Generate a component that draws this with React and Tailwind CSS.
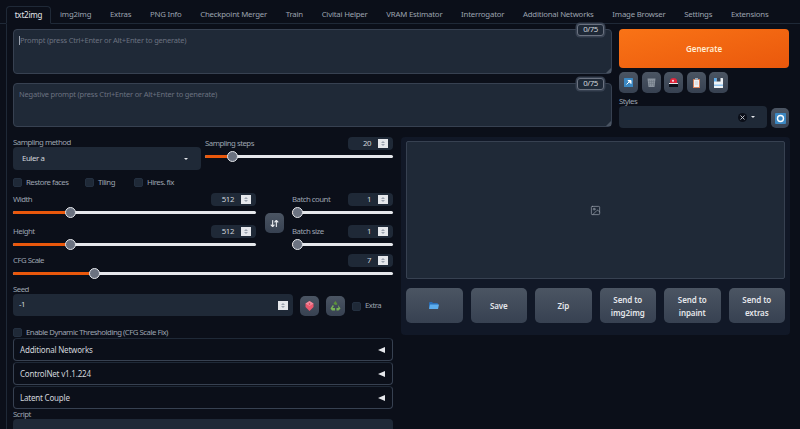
import { ArrowDownUp, Image, X } from "lucide-react";

const tabs = [
  "img2img",
  "Extras",
  "PNG Info",
  "Checkpoint Merger",
  "Train",
  "Civitai Helper",
  "VRAM Estimator",
  "Interrogator",
  "Additional Networks",
  "Image Browser",
  "Settings",
  "Extensions",
];

const Spinner = ({ h = "h-[9px]" }) => (
  <span className={`${h} w-[10px] shrink-0 bg-[#e5e7eb] flex flex-col items-center justify-center gap-px`}>
    <span className="w-0 h-0 border-x-[2px] border-x-transparent border-b-[2px] border-b-[#9ca3af]" />
    <span className="w-0 h-0 border-x-[2px] border-x-transparent border-t-[2px] border-t-[#9ca3af]" />
  </span>
);

const NumberBox = ({ value }) => (
  <div className="w-[45px] h-[13px] rounded-[4px] bg-[#1f2937] flex items-center justify-end pr-[5px] gap-[7px] text-[7.800px] tracking-[-0.4px] text-[#d1d5db]">
    <span>{value}</span>
    <Spinner />
  </div>
);

const Slider = ({ pct }) => (
  <div className="relative h-[3px] bg-[#e5e7eb] rounded-full">
    <div className="h-full bg-[#ea580c] rounded-l-full" style={{ width: `${pct}%` }} />
    <span
      className="absolute top-[-4px] ml-[-5.500px] w-[11px] h-[11px] rounded-full bg-[#6b7280] border border-[#e5e7eb]"
      style={{ left: `${pct}%` }}
    />
  </div>
);

const SliderField = ({ label, value, pct, className = "" }) => (
  <div className={className}>
    <div className="flex justify-between items-center h-[13px]">
      <span className="text-[7.800px] tracking-[-0.5px] text-[#9ca3af]">{label}</span>
      <NumberBox value={value} />
    </div>
    <div className="mt-[5px]">
      <Slider pct={pct} />
    </div>
  </div>
);

const Check = ({ label, className = "" }) => (
  <label className={`flex items-center gap-[4px] text-[7.800px] tracking-[-0.5px] text-[#9ca3af] ${className}`}>
    <span className="w-[9px] h-[9px] rounded-[2px] bg-[#1f2937] border border-[#243040]" />
    {label}
  </label>
);

const ToolButton = ({ children, className = "w-[19px] h-[21px]" }) => (
  <button className={`${className} shrink-0 rounded-[5px] bg-gradient-to-b from-[#4b5563] to-[#374151] flex items-center justify-center`}>
    {children}
  </button>
);

const Accordion = ({ title }) => (
  <div className="h-[23px] rounded-[4px] border border-[#374151] border-t-[#1f2937] flex items-center justify-between pl-[6px] pr-[7px] text-[8px] tracking-[-0.2px] text-[#d1d5db]">
    <span>{title}</span>
    <span className="w-0 h-0 border-y-[3.500px] border-y-transparent border-r-[7px] border-r-[#e5e7eb]" />
  </div>
);

const Counter = () => (
  <div className="absolute right-[7px] top-[-6px] w-[27px] h-[12px] rounded-[3px] bg-[#1f2937] border border-[#6b7280] shadow-[0_0_0_1.5px_#374151] flex items-center justify-center text-[7.800px] tracking-[-0.4px] text-[#d1d5db]">
    0/75
  </div>
);

const PromptBox = ({ placeholder, caret, className }) => (
  <div className={`relative rounded-[4px] bg-[#1f2937] border border-[#374151] pl-[5px] pt-[5px] text-[7.500px] tracking-[-0.2px] text-[#6b7280] flex items-start ${className}`}>
    {caret && <span className="w-px h-[9px] mt-[1px] bg-[#9ca3af] shrink-0" />}
    <span>{placeholder}</span>
    <Counter />
    <span className="absolute right-0 bottom-0 w-0 h-0 border-l-[5px] border-l-transparent border-b-[5px] border-b-[#4b5563]" />
  </div>
);

const SendIcon = () => (
  <svg width="9" height="9" viewBox="0 0 9 9">
    <rect width="9" height="9" rx="0.500" fill="#3b88c3" />
    <path d="M2.500 6.500l2.500-2.500M4 2.500h3v3z" stroke="#fff" strokeWidth="1" fill="#fff" />
  </svg>
);
const TrashIcon = () => (
  <svg width="9" height="9" viewBox="0 0 9 9">
    <path d="M0.500 0.500h8l-1 8.500h-6z" fill="#8a939e" />
    <path d="M2.500 2v6M4.500 2v6M6.500 2v6M1.500 3.500h6M1.500 5.500h6" stroke="#6b7480" strokeWidth=".5" />
  </svg>
);
const SirenIcon = () => (
  <svg width="9" height="9" viewBox="0 0 9 9">
    <path d="M1 5V3a3.500 3 0 017 0v2z" fill="#e0263c" />
    <circle cx="4" cy="2.800" r="1.100" fill="#fbd5dc" />
    <rect x="0" y="5" width="9" height="1" fill="#e5e7eb" />
    <rect x="0" y="6" width="9" height="3" fill="#0b0f19" />
  </svg>
);
const ClipboardIcon = () => (
  <svg width="7" height="10" viewBox="0 0 7 10">
    <rect y="1" width="7" height="9" rx="0.500" fill="#d9835f" />
    <rect x="1" y="2" width="5" height="7" fill="#eef0f2" />
    <rect x="2" y="0" width="3" height="2" fill="#99a8b8" />
    <path d="M2 4h3M2 6h3" stroke="#b6bec8" strokeWidth=".6" />
  </svg>
);
const SaveIcon = () => (
  <svg width="9" height="10" viewBox="0 0 9 10">
    <rect width="9" height="10" rx="0.500" fill="#eef2f6" />
    <rect x="0" y="6.500" width="9" height="1.500" fill="#8fc2ec" />
    <rect x="2.500" y="0" width="4" height="3.500" fill="#374151" />
    <rect x="0" y="0" width="2.500" height="3.500" fill="#5dadec" />
  </svg>
);
const RefreshIcon = () => (
  <svg width="11" height="11" viewBox="0 0 11 11">
    <rect width="11" height="11" rx="1" fill="#3b88c3" />
    <circle cx="5.500" cy="5.500" r="3" fill="none" stroke="#fff" strokeWidth="1.400" />
  </svg>
);
const DiceIcon = () => (
  <svg width="9" height="10" viewBox="0 0 9 10">
    <path d="M4.500 0L8.500 2.500V6L4.500 10L0.500 6V2.500z" fill="#ea596e" />
    <path d="M4.500 0L8.500 2.500L4.500 5L0.500 2.500z" fill="#f4abba" opacity=".6" />
    <circle cx="4.500" cy="3" r=".8" fill="#dd2e44" />
  </svg>
);
const RecycleIcon = () => (
  <svg width="11" height="10" viewBox="0 0 11 10">
    <path d="M5.500 0L7.500 3.200L6 4L4.500 3.500L3.500 2.500z" fill="#5c913b" />
    <path d="M8 4L10.500 7.500L8.500 9.500H6.500V7H8.500z" fill="#77b255" />
    <path d="M2.800 4L0.500 7.500L2 9.500H5V7H2.500L4 5z" fill="#77b255" />
  </svg>
);
const FolderIcon = () => (
  <svg width="10" height="7" viewBox="0 0 10 7">
    <path d="M0 1a1 1 0 011-1h2l1 1h4a1 1 0 011 1v4H0z" fill="#2a6db5" />
    <path d="M1 2.500h9l-1 4.500H0z" fill="#5dadec" />
  </svg>
);

const Action = ({ children }) => (
  <button className="flex-1 h-[35px] rounded-[5px] bg-gradient-to-b from-[#4b5563] to-[#374151] text-[8px] tracking-[-0.1px] leading-[13px] font-semibold text-[#e5e7eb] flex items-center justify-center">
    {children}
  </button>
);

export default function App() {
  return (
    <div
      className="h-[429px] w-[800px] overflow-hidden bg-[#0b0f19]"
      style={{ fontFamily: '"Noto Sans", sans-serif' }}
    >
      <div className="flex items-end h-[24px] pl-[6px] border-b border-[#1f2937]">
        <div className="h-[18px] -mb-px w-[45px] shrink-0 rounded-t-[4px] border border-[#1f2937] border-b-[#0b0f19] bg-[#0b0f19] flex items-center justify-center text-[8px] tracking-[-0.2px] text-[#e5e7eb]">
          txt2img
        </div>
        <div className="flex-1 flex items-center h-[16px] pl-[9px] gap-[18.700px] text-[7.800px] tracking-[-0.2px] text-[#9ca3af] whitespace-nowrap">
          {tabs.map((t) => (
            <span key={t}>{t}</span>
          ))}
        </div>
      </div>

      <div className="ml-[6px] border-l border-[#1f2937] pl-[6px] pt-[5px]">
        <div className="flex gap-[7px] pr-[11px]">
          <div className="w-[599px] flex flex-col gap-[9px]">
            <PromptBox caret placeholder="Prompt (press Ctrl+Enter or Alt+Enter to generate)" className="h-[45px]" />
            <PromptBox placeholder="Negative prompt (press Ctrl+Enter or Alt+Enter to generate)" className="h-[44px]" />
          </div>
          <div className="w-[170px]">
            <button className="w-full h-[39px] rounded-[4px] bg-gradient-to-br from-[#f97316] to-[#ea580c] text-[8px] font-semibold text-[#ffedd5]">
              Generate
            </button>
            <div className="flex gap-[3.500px] mt-[4px]">
              <ToolButton><SendIcon /></ToolButton>
              <ToolButton><TrashIcon /></ToolButton>
              <ToolButton><SirenIcon /></ToolButton>
              <ToolButton><ClipboardIcon /></ToolButton>
              <ToolButton><SaveIcon /></ToolButton>
            </div>
            <div className="text-[7.800px] tracking-[-0.5px] leading-[10px] text-[#9ca3af] mt-[3px]">Styles</div>
            <div className="flex gap-[4px] items-end">
              <div className="w-[148px] h-[22px] rounded-[4px] bg-[#1f2937] flex items-center justify-end pr-[12px] gap-[4px]">
                <span className="w-[9px] h-[9px] rounded-full bg-[#0b0f19] flex items-center justify-center">
                  <X size={7} color="#d1d5db" strokeWidth={3} />
                </span>
                <span className="w-0 h-0 border-x-[2px] border-x-transparent border-t-[2px] border-t-[#e5e7eb]" />
              </div>
              <ToolButton className="w-[18px] h-[20px]"><RefreshIcon /></ToolButton>
            </div>
          </div>
        </div>

        <div className="flex gap-[8px] mt-[9px]">
          <div className="w-[380px] shrink-0">
            <div className="flex gap-[4px]">
              <div className="w-[188px]">
                <div className="text-[7.800px] tracking-[-0.5px] leading-[10px] text-[#9ca3af]">Sampling method</div>
                <div className="h-[23px] rounded-[4px] bg-[#1f2937] flex items-center justify-between pl-[9px] pr-[13px] text-[7.800px] tracking-[-0.4px] text-[#d1d5db]">
                  Euler a
                  <span className="w-0 h-0 border-x-[2.500px] border-x-transparent border-t-[2.500px] border-t-[#e5e7eb]" />
                </div>
              </div>
              <SliderField label="Sampling steps" value="20" pct={14.500} className="flex-1" />
            </div>

            <div className="flex mt-[8px] h-[9px]">
              <Check label="Restore faces" className="w-[72px]" />
              <Check label="Tiling" className="w-[49px]" />
              <Check label="Hires. fix" />
            </div>

            <div className="flex mt-[6px]">
              <div className="w-[243px] flex flex-col gap-[11px]">
                <SliderField label="Width" value="512" pct={23.800} />
                <SliderField label="Height" value="512" pct={23.800} />
              </div>
              <div className="w-[36px] flex justify-center pt-[20px]">
                <ToolButton className="w-[19px] h-[20px]"><ArrowDownUp size={9} color="#e5e7eb" strokeWidth={3} /></ToolButton>
              </div>
              <div className="flex-1 flex flex-col gap-[11px]">
                <SliderField label="Batch count" value="1" pct={5} />
                <SliderField label="Batch size" value="1" pct={5} />
              </div>
            </div>

            <SliderField label="CFG Scale" value="7" pct={21.500} className="mt-[8px]" />

            <div className="text-[7.800px] tracking-[-0.5px] leading-[10px] text-[#9ca3af] mt-[9px]">Seed</div>
            <div className="flex items-end">
              <div className="w-[280px] h-[22px] rounded-[4px] bg-[#1f2937] flex items-center justify-between pl-[6px] pr-[5px] text-[7.800px] tracking-[-0.4px] text-[#d1d5db]">
                -1
                <Spinner />
              </div>
              <ToolButton className="w-[19px] h-[20px] ml-[7px]"><DiceIcon /></ToolButton>
              <ToolButton className="w-[19px] h-[20px] ml-[7px]"><RecycleIcon /></ToolButton>
              <Check label="Extra" className="ml-[7px] mb-[4px]" />
            </div>

            <Check label="Enable Dynamic Thresholding (CFG Scale Fix)" className="mt-[12px] h-[9px]" />

            <div className="mt-[1px] flex flex-col gap-px">
              <Accordion title="Additional Networks" />
              <Accordion title="ControlNet v1.1.224" />
              <Accordion title="Latent Couple" />
            </div>

            <div className="text-[7.800px] tracking-[-0.5px] leading-[10px] text-[#9ca3af]">Script</div>
            <div className="h-[22px] rounded-[4px] bg-[#1f2937]" />
          </div>

          <div className="w-[389px] h-[198px] rounded-[4px] bg-[#111827] px-[5px] pt-[4px]">
            <div className="h-[138px] rounded-[2px] bg-[#1f2937] border border-[#374151] flex items-center justify-center">
              <Image size={11} color="#9ca3af" strokeWidth={1.500} />
            </div>
            <div className="flex gap-[8px] mt-[9px]">
              <Action><FolderIcon /></Action>
              <Action>Save</Action>
              <Action>Zip</Action>
              <Action><span>Send to<br />img2img</span></Action>
              <Action><span>Send to<br />inpaint</span></Action>
              <Action><span>Send to<br />extras</span></Action>
            </div>
          </div>
        </div>
      </div>
    </div>
  );
}
